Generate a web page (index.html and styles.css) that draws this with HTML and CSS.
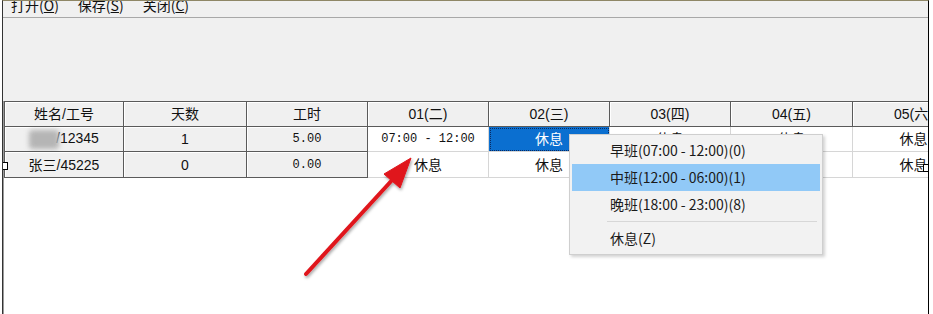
FILE: index.html
```html
<!DOCTYPE html>
<html lang="zh-CN">
  <head>
    <meta charset="UTF-8" />
    <meta name="viewport" content="width=device-width, initial-scale=1.0" />
    <title>排班</title>
    <link rel="stylesheet" href="styles.css">
  </head>
  <body>
    <div class="window">
      <div class="menubar">
        <span>打开(<u>O</u>)</span>
        <span>保存(<u>S</u>)</span>
        <span>关闭(<u>C</u>)</span>
      </div>
      <div class="toolbar"></div>
      <div class="grid">
        <table class="sheet">
          <colgroup>
            <col class="c1"><col class="c2"><col class="c3"><col class="c4">
            <col class="c5"><col class="c6"><col class="c7"><col class="c8">
          </colgroup>
          <thead>
            <tr>
              <th>姓名/工号</th>
              <th>天数</th>
              <th>工时</th>
              <th>01(二)</th>
              <th>02(三)</th>
              <th>03(四)</th>
              <th>04(五)</th>
              <th>05(六)</th>
            </tr>
          </thead>
          <tbody>
            <tr class="r1">
              <td class="fixed"><span class="blur"></span>/12345</td>
              <td class="fixed">1</td>
              <td class="fixed mono">5.00</td>
              <td class="mono">07:00 - 12:00</td>
              <td class="selected">休息</td>
              <td>休息</td>
              <td>休息</td>
              <td>休息</td>
            </tr>
            <tr class="r2">
              <td class="fixed">张三/45225</td>
              <td class="fixed">0</td>
              <td class="fixed mono">0.00</td>
              <td>休息</td>
              <td>休息</td>
              <td>休息</td>
              <td>休息</td>
              <td>休息</td>
            </tr>
          </tbody>
        </table>
      </div>

      <span class="handle left"></span>
      <span class="handle right"></span>

      <ul class="popup">
        <li>早班(07:00 - 12:00)(0)</li>
        <li class="hover">中班(12:00 - 06:00)(1)</li>
        <li>晚班(18:00 - 23:00)(8)</li>
        <li class="sep"></li>
        <li>休息(Z)</li>
      </ul>

      <svg class="arrow" width="933" height="314" viewBox="0 0 933 314">
        <defs>
          <filter id="shadow" x="-20%" y="-20%" width="140%" height="140%">
            <feDropShadow dx="1" dy="2" stdDeviation="1.5" flood-color="#000" flood-opacity="0.35" />
          </filter>
        </defs>
        <g filter="url(#shadow)" fill="#e0141c" stroke="#e0141c">
          <path d="M306 274 L394 178" stroke-width="4" stroke-linecap="round" fill="none" />
          <polygon points="411,158 384,174 400,188" stroke-width="1" stroke-linejoin="round" />
        </g>
      </svg>
    </div>
  </body>
</html>
```

FILE: styles.css
```css
body {
  margin: 0;
  padding: 0;
  background: #fff;
  font-family: "Liberation Sans", "Noto Sans CJK SC", sans-serif;
  color: #111;
}
.window {
  position: relative;
  width: 925px;
  height: 313px;
  margin-left: 2px;
  border-top: 1px solid #8f8766;
  border-left: 1px solid #333;
  border-right: 1px solid #000;
  background: #f0f0f0;
  display: flex;
  flex-direction: column;
  overflow: hidden;
}
.menubar {
  height: 16px;
  border-bottom: 1px solid #a8a8a8;
  display: flex;
  gap: 19px;
  padding-left: 8px;
  overflow: hidden;
  font-size: 14px;
  font-family: "Noto Sans CJK SC", sans-serif;
}
.menubar span {
  line-height: 14px;
  margin-top: -3px;
}
.menubar u {
  text-decoration-thickness: 1px;
}
.toolbar {
  height: 83px;
}
.grid {
  flex: 1;
  background: #fff;
  border-left: 1px solid #9a9a9a;
  overflow: hidden;
}
.sheet {
  border-collapse: separate;
  border-spacing: 0;
  table-layout: fixed;
  width: 971px;
  font-size: 14px;
  border-top: 1px solid #5a5a5a;
}
.c1 { width: 120px; }
.c2 { width: 123px; }
.c3 { width: 121px; }
.c4 { width: 121px; }
.c5 { width: 121px; }
.c6 { width: 121px; }
.c7 { width: 122px; }
.c8 { width: 122px; }
th,
td {
  padding: 0;
  text-align: center;
  vertical-align: middle;
  line-height: 18px;
  white-space: nowrap;
  overflow: hidden;
}
th {
  height: 24px;
  font-weight: normal;
  background: #f0f0f0;
  border-right: 1px solid #5a5a5a;
  border-bottom: 1px solid #5a5a5a;
  box-shadow: inset 1px 1px #fff;
}
th:first-child,
td.fixed:first-child {
  border-left: 1px solid #5a5a5a;
}
td {
  height: 24px;
  background: #fff;
  border-right: 1px solid #d6d6d6;
  border-bottom: 1px solid #d6d6d6;
}
.r2 td {
  height: 25px;
}
td.fixed {
  background: #f0f0f0;
  border-right: 1px solid #5a5a5a;
  border-bottom: 1px solid #5a5a5a;
  box-shadow: inset 1px 1px #fff;
}
.mono {
  font-family: "Liberation Mono", monospace;
  font-size: 12px;
}
td.selected {
  background: #0b6fd0;
  color: #fff;
  outline: 1px dotted #0a2a60;
  outline-offset: -2px;
}
.blur {
  display: inline-block;
  width: 30px;
  height: 19px;
  margin-right: -3px;
  vertical-align: middle;
  background: #b5b5b5;
  border-radius: 4px;
  filter: blur(2.5px);
}
.handle {
  position: absolute;
  top: 161px;
  width: 6px;
  height: 6px;
  background: #fff;
  border: 1px solid #000;
}
.handle.left {
  left: -3px;
}
.handle.right {
  left: 920px;
  top: 163px;
}
.popup {
  position: absolute;
  left: 566px;
  top: 133px;
  width: 248px;
  margin: 0;
  padding: 2px;
  list-style: none;
  background: #f2f2f2;
  border: 1px solid #cfcfcf;
  box-shadow: 2px 2px 3px rgba(0, 0, 0, 0.18);
  font-family: "Noto Sans CJK SC", sans-serif;
  font-size: 14px;
  color: #1a1a1a;
}
.popup li {
  height: 27px;
  line-height: 27px;
  padding-left: 38px;
}
.popup li.hover {
  background: #91c9f7;
}
.popup li.sep {
  height: 7px;
  padding: 0;
  margin: 0 3px 0 35px;
  background: linear-gradient(#d7d7d7, #d7d7d7) no-repeat 0 3px / 100% 1px;
}
.arrow {
  position: absolute;
  left: -3px;
  top: -1px;
  pointer-events: none;
}
```
